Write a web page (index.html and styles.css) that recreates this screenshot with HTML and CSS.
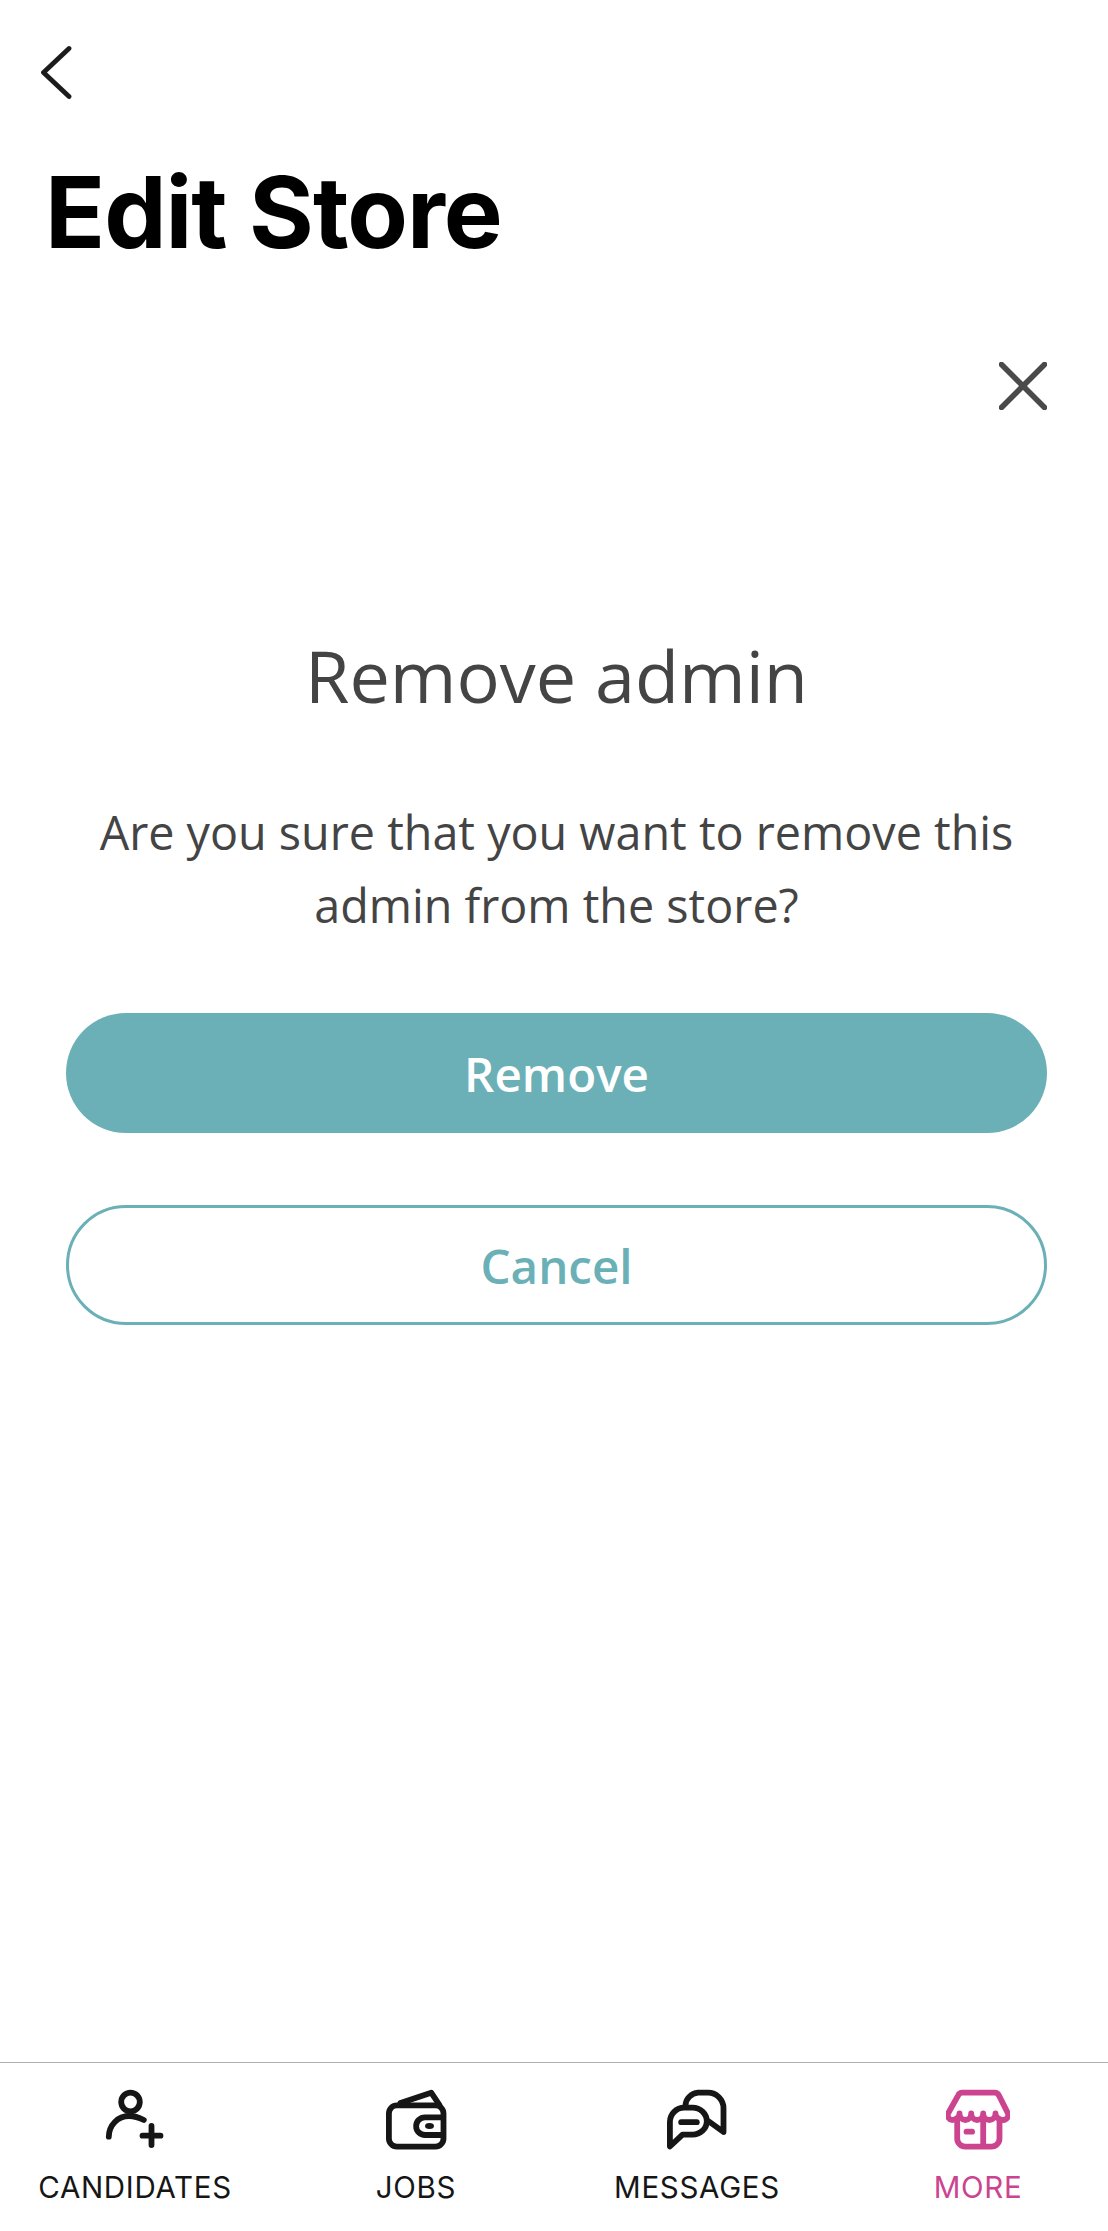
FILE: index.html
```html
<!DOCTYPE html>
<html lang="en">
	<head>
		<meta charset="UTF-8" />
		<meta name="viewport" content="width=device-width, initial-scale=1.0" />
		<title>Edit Store</title>

		<link rel="stylesheet" href="styles.css">
	</head>
	<body>
		<div id="page">
			<header id="top">
				<svg class="back" width="32" height="56" viewBox="0 0 32 56">
					<path d="M29 3.5 L3.5 27.5 L29 51.5" />
				</svg>
				<h1 class="title">Edit Store</h1>
			</header>

			<main id="dialog">
				<div class="close-row">
					<svg class="close" width="48" height="48" viewBox="0 0 48 48">
						<path d="M2.5 2.5 L45.5 45.5 M45.5 2.5 L2.5 45.5" />
					</svg>
				</div>
				<h2 class="dialog-title">Remove admin</h2>
				<p class="dialog-text">Are you sure that you want to remove this admin from the store?</p>
				<button class="btn btn-fill">Remove</button>
				<button class="btn btn-line">Cancel</button>
			</main>

			<nav id="tabs">
				<a class="tab">
					<svg class="icon" width="64" height="64" viewBox="0 0 64 64">
						<circle cx="27.5" cy="16" r="9.3" />
						<path d="M5.8 50.7 C6 39 15 30 26 30 C31 30 36 31.5 40.8 34" />
						<path d="M48.5 40 V59 M39.5 49.7 H57.5" />
					</svg>
					<span>CANDIDATES</span>
				</a>
				<a class="tab">
					<svg class="icon" width="64" height="64" viewBox="0 0 64 64">
						<rect x="4.9" y="19.4" width="54.6" height="41.2" rx="8" />
						<path d="M16.5 17 L47.2 6.7 L55.5 19" />
						<path d="M59 31.3 H41 a8.85 8.85 0 0 0 0 17.7 H59" />
						<ellipse class="solid" cx="45.5" cy="40" rx="4.5" ry="3" />
					</svg>
					<span>JOBS</span>
				</a>
				<a class="tab">
					<svg class="icon" width="64" height="64" viewBox="0 0 64 64">
						<path d="M4.9 60.5 V36 A14.3 14.3 0 0 1 19.2 21.7 H27.5 A14.3 13.5 0 0 1 41.8 35.2 A14.3 13.4 0 0 1 27.5 48.6 H17.5 Z" />
						<path d="M16.2 36.2 H31.8" />
						<path d="M20.5 19 A14 13 0 0 1 33 6.7 H43 A15.5 15.5 0 0 1 58.5 22.2 V46 L44 35.5" />
					</svg>
					<span>MESSAGES</span>
				</a>
				<a class="tab active">
					<svg class="icon" width="64" height="64" viewBox="0 0 64 64">
						<path d="M16.5 6.7 H48.5 a5 5 0 0 1 4.6 3.1 L62 27.5 a5 5 0 0 1 -5 6.5 c-4 0 -7.5 -3 -7.5 -6.5 c0 3.5 -2.6 6.5 -6.15 6.5 s-6.15 -3 -6.15 -6.5 c0 3.5 -2.6 6.5 -6 6.5 s-6 -3 -6 -6.5 c0 3.5 -2.6 6.5 -5.85 6.5 s-5.85 -3 -5.85 -6.5 c0 3.5 -3.5 6.5 -7.5 6.5 a5 5 0 0 1 -4 -6.5 L11.9 9.8 a5 5 0 0 1 4.6 -3.1 Z" />
						<path d="M11.2 34 V52.6 a8 8 0 0 0 8 8 H45.5 a8 8 0 0 0 8 -8 V34" />
						<path d="M37.2 34 V60 M20.5 45.7 H26.1" />
					</svg>
					<span>MORE</span>
				</a>
			</nav>
		</div>
	</body>
</html>
```

FILE: styles.css
```css
body {
	margin: 0;
	background-color: white;
	font-family: "Open Sans", sans-serif;
}

#page {
	display: flex;
	flex-direction: column;
	height: 2231px;
}

#top {
	padding: 45px 0 0 40px;
}

.back {
	display: block;
	fill: none;
	stroke: #1c1c1c;
	stroke-width: 4.8;
	stroke-linecap: round;
	stroke-linejoin: round;
}

.title {
	margin: 51px 0 0 5px;
	font-family: Inter, sans-serif;
	font-size: 99px;
	font-weight: 700;
	letter-spacing: -1px;
	line-height: 120px;
	color: black;
}

#dialog {
	flex: 1;
	display: flex;
	flex-direction: column;
	align-items: center;
	padding: 0 61px 0 66px;
}

.close-row {
	align-self: flex-end;
	margin-top: 90px;
}

.close {
	display: block;
	fill: none;
	stroke: #4a4a4a;
	stroke-width: 5.6;
	stroke-linecap: round;
}

.dialog-title {
	margin: 220px 0 0;
	font-size: 72px;
	font-weight: 400;
	line-height: 90px;
	color: #444444;
}

.dialog-text {
	margin: 76px 0 0;
	width: 930px;
	font-size: 46.7px;
	line-height: 72.5px;
	text-align: center;
	color: #444444;
}

.btn {
	display: block;
	width: 100%;
	height: 120px;
	border-radius: 60px;
	font-family: "Open Sans", sans-serif;
	font-size: 47.5px;
	font-weight: 600;
}

.btn-fill {
	margin-top: 72px;
	border: none;
	background-color: #6bb0b7;
	color: white;
}

.btn-line {
	margin-top: 72px;
	border: 3px solid #6bb0b7;
	background-color: white;
	color: #6bb0b7;
}

#tabs {
	display: grid;
	grid-template-columns: repeat(4, 200px);
	column-gap: 81px;
	height: 168px;
	padding-left: 35px;
	border-top: 1px solid #b0b0b0;
}

.tab {
	display: flex;
	flex-direction: column;
	align-items: center;
	padding-top: 23px;
	font-family: Inter, sans-serif;
	font-size: 29.5px;
	letter-spacing: 0.7px;
	white-space: nowrap;
	color: #161616;
}

.tab span {
	margin-top: 19px;
	line-height: 36px;
}

.tab.active {
	color: #cc448f;
}

.icon {
	display: block;
	fill: none;
	stroke: currentColor;
	stroke-width: 5.8;
	stroke-linecap: round;
	stroke-linejoin: round;
}

.icon .solid {
	fill: currentColor;
	stroke: none;
}
```
